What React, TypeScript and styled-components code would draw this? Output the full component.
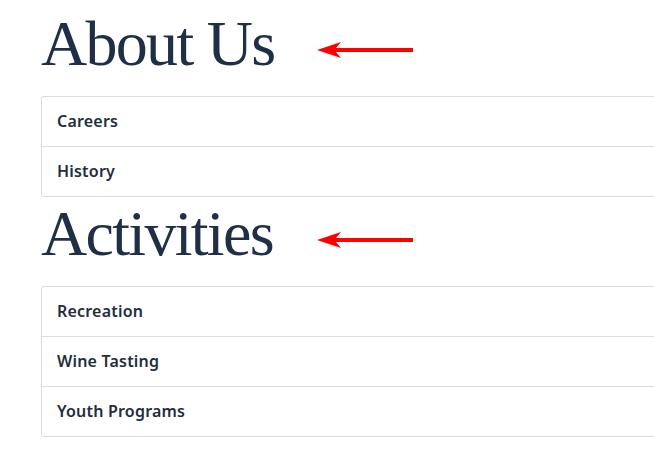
import React from 'react'
import styled, { createGlobalStyle } from 'styled-components'

const GlobalStyle = createGlobalStyle`
  html, body {
    margin: 0;
    padding: 0;
    background: #ffffff;
    overflow: hidden;
  }
`

const Page = styled.div`
  padding: 7px 0 0 41px;
  font-family: 'Noto Sans', sans-serif;
`

const HeadingRow = styled.div`
  display: grid;
  grid-template-columns: 276px auto;
  align-items: start;
  margin: 5px 0 20px;
`

const Heading = styled.h2`
  margin: 0;
  font-family: 'Liberation Serif', serif;
  font-weight: 400;
  font-size: 64px;
  line-height: 64px;
  letter-spacing: -1.7px;
  color: #1e2f46;
  white-space: nowrap;
`

const Arrow = styled.svg`
  display: block;
  margin-top: 30px;
`

const List = styled.ul`
  list-style: none;
  margin: 0;
  padding: 0;
  width: 660px;
  border: 1px solid #dcdcdc;
  border-radius: 3px;
`

const Item = styled.li`
  box-sizing: border-box;
  height: 50px;
  display: flex;
  align-items: center;
  padding: 0 15px 1px;
  font-size: 16px;
  font-weight: 600;
  letter-spacing: 0.2px;
  color: #222e3c;
  border-bottom: 1px solid #dcdcdc;

  &:last-child {
    border-bottom: none;
    height: 49px;
  }
`

const RedArrow = () => (
  <Arrow width="96" height="16" viewBox="0 0 96 16">
    <path d="M0 8 L24 0 L19 6 L96 6 L96 10 L19 10 L24 16 Z" fill="#ff0000" />
  </Arrow>
)

const sections = [
  { title: 'About Us', items: ['Careers', 'History'] },
  { title: 'Activities', items: ['Recreation', 'Wine Tasting', 'Youth Programs'] }
]

export default function App() {
  return (
    <Page>
      <GlobalStyle />
      {sections.map((s) => (
        <section key={s.title}>
          <HeadingRow>
            <Heading>{s.title}</Heading>
            <RedArrow />
          </HeadingRow>
          <List>
            {s.items.map((i) => (
              <Item key={i}>{i}</Item>
            ))}
          </List>
        </section>
      ))}
    </Page>
  )
}
